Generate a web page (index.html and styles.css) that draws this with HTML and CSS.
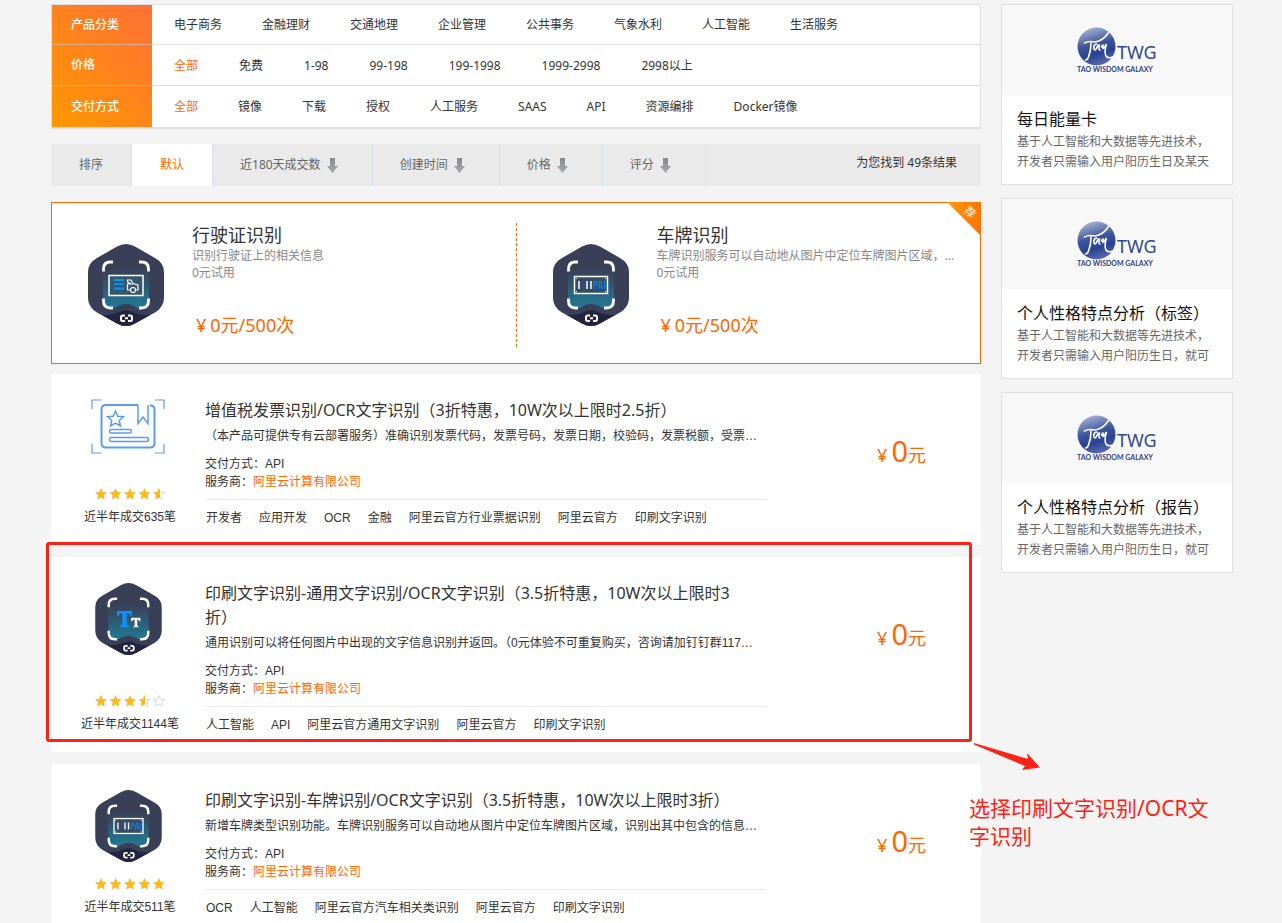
FILE: index.html
```html
<!DOCTYPE html>
<html lang="zh-CN">
<head>
<meta charset="utf-8">
<title>云市场 - OCR文字识别</title>
<link rel="stylesheet" href="styles.css">
</head>
<body>
<svg class="sprite" aria-hidden="true">
  <defs>
    <linearGradient id="teal" x1="0" y1="0" x2="0" y2="1">
      <stop offset="0.15" stop-color="#3a3f58"/>
      <stop offset="1" stop-color="#207b95"/>
    </linearGradient>
    <linearGradient id="ball" x1="0.3" y1="0" x2="0.6" y2="1">
      <stop offset="0" stop-color="#a9b4d6"/>
      <stop offset="0.45" stop-color="#3c539c"/>
      <stop offset="0.7" stop-color="#2b4291"/>
      <stop offset="1" stop-color="#5a6db0"/>
    </linearGradient>
    <linearGradient id="arrow" x1="0" y1="0" x2="0" y2="1">
      <stop offset="0" stop-color="#85878b"/>
      <stop offset="1" stop-color="#a9abaf"/>
    </linearGradient>
    <linearGradient id="ribbon" x1="0" y1="0" x2="1" y2="0">
      <stop offset="0" stop-color="#ff9a0d"/>
      <stop offset="1" stop-color="#ff7404"/>
    </linearGradient>
  </defs>
  <symbol id="hex" viewBox="0 0 76 82">
    <path fill="#3a3f58" d="M29 2.5Q38-2.5 47 2.5L67 14Q76 19 76 28V54Q76 63 67 68.500L47 79.500Q38 84.500 29 79.500L9 68.500Q0 63 0 54V28Q0 19 9 14Z"/>
    <rect x="15" y="18" width="46" height="46" rx="7" fill="url(#teal)"/>
    <path fill="#3a3f58" d="M17 65Q25 66 30 62Q38 58 46 62Q51 66 59 65L62 71H14Z"/>
    <path fill="#23243f" d="M14 71Q25 71.500 31 68Q38 64.500 45 68Q51 71.500 62 71L47 79.500Q38 84.500 29 79.500Z"/>
    <path fill="none" stroke="#fff" stroke-width="2.800" d="M15.500 27.500V25Q15.500 18 22.500 18H25M51 18H53.500Q60.500 18 60.500 25V27.500M60.500 54.500V57Q60.500 64 53.500 64H51M25 64H22.500Q15.500 64 15.500 57V54.500"/>
    <path fill="none" stroke="#fff" stroke-width="2" d="M37 71.500H35Q33 71.500 33 73V75.500Q33 77 35 77H37M40 71.500H42Q44 71.500 44 73V75.500Q44 77 42 77H40M37 74.300H40"/>
  </symbol>
  <symbol id="licence" viewBox="0 0 76 82">
    <use href="#hex"/>
    <rect x="21" y="31.500" width="34" height="20" fill="#34566f" stroke="#fff" stroke-width="1.500"/>
    <path stroke="#0a93f5" stroke-width="1.800" d="M26 36H36M26 40.200H36M26 44.500H36"/>
    <path fill="none" stroke="#fff" stroke-width="1.200" d="M42.500 46H39.500V40H43L39.500 38V36H43L45 39.500L50 41V46H47.500"/>
    <circle cx="45" cy="46" r="2.500" fill="#34566f" stroke="#fff" stroke-width="1.200"/>
  </symbol>
  <symbol id="plate" viewBox="0 0 76 82">
    <use href="#hex"/>
    <rect x="21.500" y="32.500" width="33" height="17" fill="#344c66" stroke="#fff" stroke-width="1.500"/>
    <path stroke="#fff" stroke-width="1.500" d="M26 37V45M34 37V45M38 37V45"/>
    <path fill="#fff" d="M23 34h1v1h-1zM52 34h1v1h-1zM23 47h1v1h-1zM52 47h1v1h-1z"/>
    <path fill="none" stroke="#0a86ea" stroke-width="1.100" d="M41 45V37.500H44V41H41M45.500 45L47 37.500H48L49.500 45M46 43H49M51.500 37V45"/>
  </symbol>
  <symbol id="text" viewBox="0 0 76 82">
    <use href="#hex"/>
    <path fill="#0a93f5" d="M25 32H42V38H40.500Q40 34.500 36 34.500V46.500Q36 48.500 38.500 48.500V50H28.500V48.500Q31 48.500 31 46.500V34.500Q27 34.500 26.500 38H25Z"/>
    <path fill="#fff" d="M41 39.500H51.500V43.500H50.300Q50 41.500 48 41.500V48Q48 49.500 49.500 49.500V50.500H43.500V49.500Q45 49.500 45 48V41.500Q42.500 41.500 42.200 43.500H41Z"/>
  </symbol>
  <symbol id="invoice" viewBox="0 0 74 55">
    <g fill="none" stroke="#5a9df0">
      <path stroke-width="1.200" d="M1 10V1H10.500M64 1H73V10M73 45V54H64M10.500 54H1V45"/>
      <path stroke-width="2" d="M47 6H15Q10.500 6 10.500 10.500V44Q10.500 48.500 15 48.500H59Q63.500 48.500 63.500 44V10.500Q63.500 6.500 59 6.300"/>
      <path stroke-width="1.500" d="M47 6V24.500L52 18L57 24.500V6"/>
      <path stroke-width="1.500" d="M24.500 12L26.800 17.200L32.500 17.700L28.300 21.500L29.500 27L24.500 24.200L19.500 27L20.700 21.500L16.500 17.700L22.200 17.200Z"/>
      <rect stroke-width="1.500" x="18.500" y="30.500" width="22" height="3.500" rx="1.700"/>
      <rect stroke-width="1.500" x="18.500" y="38.500" width="39" height="4" rx="2"/>
    </g>
  </symbol>
  <symbol id="star" viewBox="0 0 12 12">
    <path d="M6 .6L7.600 4.200L11.500 4.600L8.600 7.200L9.400 11.200L6 9.200L2.600 11.200L3.400 7.200L.5 4.600L4.400 4.200Z"/>
  </symbol>
  <symbol id="stars" viewBox="0 0 70 12">
    <use href="#star" x="0" width="12" height="12"/>
    <use href="#star" x="14.500" width="12" height="12"/>
    <use href="#star" x="29" width="12" height="12"/>
    <use href="#star" x="43.500" width="12" height="12"/>
    <use href="#star" x="58" width="12" height="12"/>
  </symbol>
  <symbol id="down" viewBox="0 0 11 15">
    <path fill="url(#arrow)" d="M3 0H8V8H11L5.500 15L0 8H3Z"/>
  </symbol>
  <symbol id="globe" viewBox="0 0 39 39">
    <circle cx="19.500" cy="19.500" r="19" fill="url(#ball)"/>
    <path fill="none" stroke="#fff" stroke-width="1.600" stroke-linecap="round" d="M7.500 16Q12 13.500 18 15Q26 14 31.500 5.500M14 16Q14 24 11.500 30Q10.500 33 8.500 33M19.500 17Q16 18 17 22Q18.500 25 21 18M22.500 18Q21 23 23 23M24.500 20Q26.500 16 26 20Q25.500 24 29.500 17Q27 25 29 29Q31 32 36 30"/>
  </symbol>
</svg>

<div class="page">
  <main class="main">
    <section class="filter">
      <dl class="filter-list">
        <div class="filter-row">
          <dt>产品分类</dt>
          <dd><a href="#">电子商务</a><a href="#">金融理财</a><a href="#">交通地理</a><a href="#">企业管理</a><a href="#">公共事务</a><a href="#">气象水利</a><a href="#">人工智能</a><a href="#">生活服务</a></dd>
        </div>
        <div class="filter-row">
          <dt>价格</dt>
          <dd class="prices"><a class="on" href="#">全部</a><a href="#">免费</a><a href="#">1-98</a><a href="#">99-198</a><a href="#">199-1998</a><a href="#">1999-2998</a><a href="#">2998以上</a></dd>
        </div>
        <div class="filter-row">
          <dt>交付方式</dt>
          <dd><a class="on" href="#">全部</a><a href="#">镜像</a><a href="#">下载</a><a href="#">授权</a><a href="#">人工服务</a><a href="#">SAAS</a><a href="#">API</a><a href="#">资源编排</a><a href="#">Docker镜像</a></dd>
        </div>
      </dl>
    </section>

    <nav class="sort">
      <span class="sort-item">排序</span>
      <a class="sort-item active" href="#">默认</a>
      <a class="sort-item" href="#">近180天成交数<svg class="down"><use href="#down"/></svg></a>
      <a class="sort-item" href="#">创建时间<svg class="down"><use href="#down"/></svg></a>
      <a class="sort-item" href="#">价格<svg class="down"><use href="#down"/></svg></a>
      <a class="sort-item" href="#">评分<svg class="down"><use href="#down"/></svg></a>
      <span class="found">为您找到 49条结果</span>
    </nav>

    <section class="promo">
      <article class="promo-item">
        <svg class="promo-icon"><use href="#licence"/></svg>
        <div class="promo-body">
          <h2><a href="#">行驶证识别</a></h2>
          <p>识别行驶证上的相关信息</p>
          <p>0元试用</p>
          <strong class="promo-price"><small>¥</small>0元/500次</strong>
        </div>
      </article>
      <article class="promo-item">
        <svg class="promo-icon"><use href="#plate"/></svg>
        <div class="promo-body">
          <h2><a href="#">车牌识别</a></h2>
          <p>车牌识别服务可以自动地从图片中定位车牌图片区域，识别出车牌号码</p>
          <p>0元试用</p>
          <strong class="promo-price"><small>¥</small>0元/500次</strong>
        </div>
      </article>
      <svg class="ribbon" viewBox="0 0 34 34">
        <path fill="url(#ribbon)" d="M0 0H34V34Z"/>
        <text class="ribbon-text" x="23" y="14" transform="rotate(45 23 10)">荐</text>
      </svg>
    </section>

    <article class="product">
      <div class="thumb">
        <svg class="thumb-wide"><use href="#invoice"/></svg>
        <svg class="rating" viewBox="0 0 70 12"><use class="off" href="#stars"/><svg width="65" height="12"><use class="lit" href="#stars" width="70" height="12"/></svg></svg>
        <span class="sold">近半年成交635笔</span>
      </div>
      <div class="info">
        <h3><a href="#">增值税发票识别/OCR文字识别（3折特惠，10W次以上限时2.5折）</a></h3>
        <p class="desc">（本产品可提供专有云部署服务）准确识别发票代码，发票号码，发票日期，校验码，发票税额，受票方信息</p>
        <p class="meta">交付方式：API</p>
        <p class="meta">服务商：<a class="vendor" href="#">阿里云计算有限公司</a></p>
        <div class="tags"><a href="#">开发者</a><a href="#">应用开发</a><a href="#">OCR</a><a href="#">金融</a><a href="#">阿里云官方行业票据识别</a><a href="#">阿里云官方</a><a href="#">印刷文字识别</a></div>
      </div>
      <strong class="price"><small>¥</small><b>0</b>元</strong>
    </article>

    <article class="product marked">
      <div class="thumb">
        <svg class="thumb-hex"><use href="#text"/></svg>
        <svg class="rating" viewBox="0 0 70 12"><use class="off" href="#stars"/><svg width="50" height="12"><use class="lit" href="#stars" width="70" height="12"/></svg></svg>
        <span class="sold">近半年成交1144笔</span>
      </div>
      <div class="info">
        <h3><a href="#">印刷文字识别-通用文字识别/OCR文字识别（3.5折特惠，10W次以上限时3折）</a></h3>
        <p class="desc">通用识别可以将任何图片中出现的文字信息识别并返回。（0元体验不可重复购买，咨询请加钉钉群11726581）</p>
        <p class="meta">交付方式：API</p>
        <p class="meta">服务商：<a class="vendor" href="#">阿里云计算有限公司</a></p>
        <div class="tags"><a href="#">人工智能</a><a href="#">API</a><a href="#">阿里云官方通用文字识别</a><a href="#">阿里云官方</a><a href="#">印刷文字识别</a></div>
      </div>
      <strong class="price"><small>¥</small><b>0</b>元</strong>
      <div class="frame"></div>
      <svg class="pointer" viewBox="0 0 66 28"><path fill="#ff2113" d="M0 0L54 16L53 10L66 24.500L48 27L51 23L0 1.500Z"/></svg>
      <p class="note">选择印刷文字识别/OCR文字识别</p>
    </article>

    <article class="product">
      <div class="thumb">
        <svg class="thumb-hex"><use href="#plate"/></svg>
        <svg class="rating" viewBox="0 0 70 12"><use class="off" href="#stars"/><svg width="68" height="12"><use class="lit" href="#stars" width="70" height="12"/></svg></svg>
        <span class="sold">近半年成交511笔</span>
      </div>
      <div class="info">
        <h3><a href="#">印刷文字识别-车牌识别/OCR文字识别（3.5折特惠，10W次以上限时3折）</a></h3>
        <p class="desc">新增车牌类型识别功能。车牌识别服务可以自动地从图片中定位车牌图片区域，识别出其中包含的信息和车牌号码</p>
        <p class="meta">交付方式：API</p>
        <p class="meta">服务商：<a class="vendor" href="#">阿里云计算有限公司</a></p>
        <div class="tags"><a href="#">OCR</a><a href="#">人工智能</a><a href="#">阿里云官方汽车相关类识别</a><a href="#">阿里云官方</a><a href="#">印刷文字识别</a></div>
      </div>
      <strong class="price"><small>¥</small><b>0</b>元</strong>
    </article>
  </main>

  <aside class="side">
    <a class="side-card" href="#">
      <span class="side-pic"><svg class="twg" viewBox="0 0 80 46"><use href="#globe" width="39" height="39"/><text class="logo-name" x="40" y="32">TWG</text><text class="logo-tag" x="0" y="45">TAO WISDOM GALAXY</text></svg></span>
      <span class="side-title">每日能量卡</span>
      <span class="side-desc">基于人工智能和大数据等先进技术，开发者只需输入用户阳历生日及某天</span>
    </a>
    <a class="side-card" href="#">
      <span class="side-pic"><svg class="twg" viewBox="0 0 80 46"><use href="#globe" width="39" height="39"/><text class="logo-name" x="40" y="32">TWG</text><text class="logo-tag" x="0" y="45">TAO WISDOM GALAXY</text></svg></span>
      <span class="side-title">个人性格特点分析（标签）</span>
      <span class="side-desc">基于人工智能和大数据等先进技术，开发者只需输入用户阳历生日，就可</span>
    </a>
    <a class="side-card" href="#">
      <span class="side-pic"><svg class="twg" viewBox="0 0 80 46"><use href="#globe" width="39" height="39"/><text class="logo-name" x="40" y="32">TWG</text><text class="logo-tag" x="0" y="45">TAO WISDOM GALAXY</text></svg></span>
      <span class="side-title">个人性格特点分析（报告）</span>
      <span class="side-desc">基于人工智能和大数据等先进技术，开发者只需输入用户阳历生日，就可</span>
    </a>
  </aside>
</div>
</body>
</html>
```
FILE: styles.css
```css
* { box-sizing: border-box; }

body {
  margin: 0;
  background: #f4f4f4;
  color: #333;
  font: 12px/18px "Noto Sans", "Noto Sans CJK SC", sans-serif;
}

a { color: inherit; text-decoration: none; }
h2, h3, p, dl, dd { margin: 0; font-weight: 400; }
strong, b, small { font-weight: 400; }
svg { display: block; }

.sprite { position: absolute; width: 0; height: 0; }

.page {
  display: flex;
  align-items: flex-start;
  gap: 20px;
  padding: 4px 49px 0 51px;
}
.main { flex: 1; min-width: 0; }

/* Filters */
.filter {
  border: 1px solid #e0e0e0;
  border-bottom-width: 2px;
  background: #fff;
}
.filter-list {
  background: linear-gradient(45deg, #ff9800, #ff7036) left / 100px 100% no-repeat;
}
.filter-row { display: flex; align-items: center; height: 41px; }
.filter-row:first-child { height: 40px; }
.filter-row:not(:last-child) { border-bottom: 1px solid rgba(204, 204, 204, 0.6); }
.filter-row dt { width: 100px; padding-left: 19px; color: #fff; font-weight: 500; }
.filter-row dd { display: flex; gap: 40px; padding-left: 22px; }
.filter-row .prices { gap: 41px; padding-top: 1px; }
.on { color: #f60; }

/* Sorting */
.sort {
  display: flex;
  align-items: stretch;
  height: 42px;
  margin-top: 15px;
  background: #eaeaea;
  color: #666;
}
.sort-item {
  display: flex;
  align-items: center;
  gap: 6px;
  padding: 0 34px 0 27px;
  border-right: 1px solid #d3e2f2;
}
.sort-item:nth-child(-n+2) { padding: 0 28px; }
.active { background: #fff; color: #f60; }
.down { width: 11px; height: 15px; }
.found { margin-left: auto; padding: 10px 24px 0 0; color: #333; }

/* Promoted pair */
.promo {
  position: relative;
  display: flex;
  height: 162px;
  margin-top: 16px;
  padding: 20px 0 16px;
  border: 1px solid #f60;
  background: #fff;
}
.promo-item {
  display: flex;
  flex: 1;
  gap: 28px;
  min-width: 0;
  padding: 0 24px 0 36px;
}
.promo-item:first-child { border-right: 1px dashed #f60; }
.promo-icon { flex: none; width: 76px; height: 82px; margin-top: 21px; }
.promo-body { display: flex; flex-direction: column; min-width: 0; }
.promo-body h2 { font-size: 18px; line-height: 24px; color: #333; }
.promo-body p {
  overflow: hidden;
  color: #888;
  line-height: 17px;
  text-overflow: ellipsis;
  white-space: nowrap;
}
.promo-price {
  margin-top: auto;
  padding: 0 0 8px 4px;
  color: #f60;
  font-size: 18px;
  line-height: 28px;
}
.promo-price small { margin-right: 4px; font-size: 18px; }
.ribbon { position: absolute; top: -1px; right: -1px; width: 34px; height: 34px; }
.ribbon-text { fill: #fff; font-size: 11px; text-anchor: middle; }

/* Product rows */
.product {
  position: relative;
  display: flex;
  margin-top: 12px;
  padding: 24px 55px 18px 24px;
  background: #fff;
}
.promo + .product { margin-top: 10px; }
.thumb {
  display: flex;
  flex: none;
  flex-direction: column;
  align-items: center;
  width: 110px;
}
.thumb-wide { width: 74px; height: 55px; margin: 1px 4px 0 0; }
.thumb-hex { width: 67px; height: 72px; margin: 2px 4px 0 0; }
.rating { width: 70px; height: 12px; margin: auto 0 7px; }
.off { fill: #fff; stroke: #d8d8d8; stroke-width: 1px; }
.lit { fill: #ffb90f; }
.sold { font-family: "Liberation Sans", "Noto Sans CJK SC", sans-serif; line-height: 20px; }
.info { flex: 0 1 561px; min-width: 0; margin-left: 20px; }
.info h3 { max-width: 546px; font-size: 16px; line-height: 24px; }
.desc {
  max-width: 554px;
  margin: 4px 0 9px;
  overflow: hidden;
  line-height: 20px;
  text-overflow: ellipsis;
  white-space: nowrap;
}
.desc, .meta, .tags { font-family: "Liberation Sans", "Noto Sans CJK SC", sans-serif; }
.vendor { color: #f60; }
.tags {
  display: flex;
  gap: 17px;
  margin-top: 8px;
  padding: 9px 0 0 1px;
  border-top: 1px solid #ebebeb;
}
.price {
  margin: 35px 0 0 auto;
  color: #f60;
  font-size: 18px;
  line-height: 36px;
  height: 36px;
}
.price b { font-size: 29px; }
.price small { margin-right: 4px; font-size: 18px; }

/* Callout on the marked product */
.frame {
  position: absolute;
  inset: -15px 9px 10px -5px;
  border: 3px solid #ff2113;
  border-radius: 3px;
}
.pointer { position: absolute; top: 186px; left: calc(100% - 7px); width: 66px; height: 28px; }
.note {
  position: absolute;
  z-index: 1;
  top: 237px;
  left: calc(100% - 12px);
  width: 250px;
  color: #ff2113;
  font-size: 21px;
  line-height: 28px;
}

/* Sidebar */
.side { display: grid; flex: none; gap: 13px; width: 232px; }
.side-card {
  display: flex;
  flex-direction: column;
  padding-bottom: 12px;
  border: 1px solid #e0e0e0;
  background: #fff;
}
.side-pic {
  display: flex;
  align-items: center;
  justify-content: center;
  height: 90px;
  margin-bottom: 12px;
  background: #f8f8f8;
}
.twg { width: 80px; height: 46px; }
.logo-name { fill: #33488f; font: 18px "Noto Sans", sans-serif; }
.logo-tag { fill: #2b3f8f; font: bold 7px Lato, sans-serif; }
.side-title { padding: 0 15px; color: #111; font-size: 16px; line-height: 24px; }
.side-desc { margin-top: 1px; padding: 0 15px; color: #666; line-height: 20px; }
```
